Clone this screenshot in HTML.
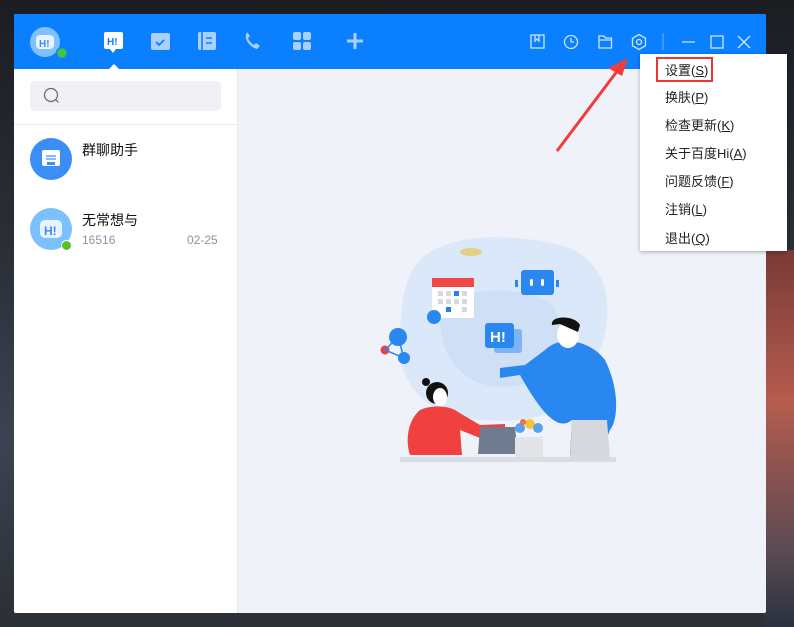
<!DOCTYPE html>
<html><head><meta charset="utf-8"><style>
*{margin:0;padding:0;box-sizing:border-box}
body{width:794px;height:627px;overflow:hidden;position:relative;font-family:"Liberation Sans","Noto Sans CJK SC",sans-serif;
background:linear-gradient(180deg,#1b1d22 0%,#2a2f38 40%,#3b4450 70%,#2b2f36 100%);}
.bgr{position:absolute;right:0;top:250px;width:30px;height:377px;background:linear-gradient(180deg,#7a3a36,#b55c4e 40%,#5a4a52 80%,#2a3140)}
.win{position:absolute;left:14px;top:14px;width:752px;height:599px;background:#eff3f9;border-radius:2px;overflow:hidden}
.hdr{position:absolute;left:0;top:0;width:752px;height:55px;background:#0a80ff}
.side{position:absolute;left:0;top:55px;width:224px;height:544px;background:#fff;border-right:1px solid #e6e8ec}
.search{position:absolute;left:16px;top:12px;width:191px;height:30px;background:#f0f1f5;border-radius:4px}
.sep{position:absolute;left:0;top:55px;width:224px;height:1px;background:#e8e8e8}
.item{position:absolute;left:16px;width:42px;height:42px;border-radius:50%}
.name{position:absolute;left:68px;font-size:14px;color:#111}
.sub{position:absolute;font-size:12px;color:#8a94a3}
.menu{position:absolute;left:640px;top:54px;width:147px;height:197px;background:#fff;box-shadow:0 1px 4px rgba(0,0,0,.3)}
.menu div{position:absolute;left:25px;font-size:13px;color:#222}
.menu u{text-decoration:underline}
</style></head><body>
<div class="bgr"></div>
<div class="win">
 <div class="hdr">
  <svg width="752" height="55" style="position:absolute;left:0;top:0">
   <circle cx="31" cy="28" r="15" fill="#7fc0ff"/>
   <rect x="22" y="21" width="18" height="14" rx="4" fill="#e8f3ff"/>
   <text x="25" y="33" font-size="10" font-weight="bold" fill="#3a8cf0" font-family="Liberation Sans">H!</text>
   <circle cx="48" cy="39" r="5.5" fill="#3fc53f" stroke="#0a80ff" stroke-width="1.5"/>
   <rect x="90" y="18" width="19" height="17" rx="2" fill="#fff"/><path d="M96 35 l3 4 3-4z" fill="#fff"/>
   <text x="93" y="31" font-size="10" font-weight="bold" fill="#0a80ff" font-family="Liberation Sans">H!</text>
   <path d="M95 55 l5 -5 5 5z" fill="#fff"/>
   <g fill="#a9d0ff"><rect x="137" y="19" width="19" height="17" rx="2"/><rect x="184" y="18" width="18" height="18" rx="2"/>
   <rect x="279" y="18" width="8" height="8" rx="2"/><rect x="289" y="18" width="8" height="8" rx="2"/><rect x="279" y="28" width="8" height="8" rx="2"/><rect x="289" y="28" width="8" height="8" rx="2"/></g>
   <path d="M137 22 h19" stroke="#0a80ff" stroke-width="0"/>
   <path d="M142 28 l3 3 5-5" stroke="#0a80ff" stroke-width="1.8" fill="none"/>
   <path d="M188 18 v18 M192 24 h6 M192 29 h6" stroke="#0a80ff" stroke-width="1.6"/>
   <path d="M233 19 c-4 4 2 14 10 16 l3-3 -4-3 -2 2 c-3-2-5-4-6-7 l2-2 -3-4z" fill="#a9d0ff"/>
   <path d="M341 19 v16 M333 27 h16" stroke="#a9d0ff" stroke-width="3"/>
   <g stroke="#cfe4ff" stroke-width="1.3" fill="none">
    <rect x="517" y="21" width="13" height="13"/><path d="M521 21 v6 l2-2 2 2 v-6"/>
    <circle cx="557" cy="28" r="6.5"/><path d="M557 24 v4 h3"/>
    <path d="M585 22 h5 l1.5 2 h6 v10 h-12.5z M585 26 h12.5"/>
    <path d="M625 20.5 l6.5 3.75 v7.5 l-6.5 3.75 -6.5-3.75 v-7.5z"/><circle cx="625" cy="28" r="2.5"/>
    <path d="M649 19 v17" stroke="#5aa5ff"/>
    <path d="M668 28 h13"/><rect x="697" y="22" width="12" height="12"/><path d="M724 22 l12 12 M736 22 l-12 12"/>
   </g>
  </svg>
 </div>
 <div class="side">
  <div class="search"><svg width="30" height="30"><circle cx="21" cy="14" r="6.5" stroke="#666" stroke-width="1.2" fill="none"/><path d="M25.5 18.5 l3 3" stroke="#666" stroke-width="1.2"/></svg></div>
  <div class="sep"></div>
  <div class="item" style="top:69px;background:#3b8ef5"><svg width="42" height="42"><rect x="12" y="12" width="18" height="16" rx="2" fill="#fff"/><path d="M17 24 h8 v3 h-8z" fill="#3b8ef5"/><path d="M16 18 h10 M16 21 h10" stroke="#3b8ef5" stroke-width="1.3"/></svg></div>
  <div class="name" style="top:71px">群聊助手</div>
  <div class="item" style="top:139px;background:#7cc1ff"><svg width="42" height="42"><rect x="10" y="12" width="22" height="18" rx="5" fill="#e8f3ff"/><text x="14" y="27" font-size="12" font-weight="bold" fill="#3a8cf0" font-family="Liberation Sans">H!</text></svg></div>
  <div style="position:absolute;left:47px;top:171px;width:11px;height:11px;border-radius:50%;background:#5fbf1f;border:1.5px solid #fff"></div>
  <div class="name" style="top:141px">无常想与</div>
  <div class="sub" style="left:68px;top:164px">16516</div>
  <div class="sub" style="left:173px;top:164px">02-25</div>
 </div>
 <svg width="752" height="599" style="position:absolute;left:0;top:0">
  <g transform="translate(-14,-14)">
   <path d="M420 260 C450 230 520 235 560 245 C610 258 615 310 600 350 C585 410 540 425 480 420 C420 415 395 380 400 330 C402 300 405 275 420 260z" fill="#dbe8f9"/>
   <path d="M440 320 C450 285 510 285 545 300 C575 320 560 370 520 385 C480 395 440 370 440 320z" fill="#cfe0f6"/>
   <ellipse cx="471" cy="252" rx="11" ry="4" fill="#e3cf8a"/>
   <rect x="432" y="278" width="42" height="40" rx="2" fill="#fff"/><rect x="432" y="278" width="42" height="9" fill="#f0494a"/>
   <g fill="#d5d8de"><rect x="438" y="291" width="5" height="5"/><rect x="446" y="291" width="5" height="5"/><rect x="462" y="291" width="5" height="5"/><rect x="438" y="299" width="5" height="5"/><rect x="446" y="299" width="5" height="5"/><rect x="454" y="299" width="5" height="5"/><rect x="462" y="299" width="5" height="5"/><rect x="446" y="307" width="5" height="5"/><rect x="462" y="307" width="5" height="5"/></g>
   <rect x="454" y="291" width="5" height="5" fill="#2a7de8"/><rect x="446" y="307" width="5" height="5" fill="#2a7de8"/>
   <circle cx="434" cy="317" r="7" fill="#2a87ef"/>
   <rect x="521" y="270" width="33" height="25" rx="3" fill="#2a87ef"/>
   <rect x="530" y="279" width="3" height="7" rx="1.5" fill="#fff"/><rect x="541" y="279" width="3" height="7" rx="1.5" fill="#fff"/>
   <rect x="515" y="280" width="3" height="7" fill="#2a87ef"/><rect x="556" y="280" width="3" height="7" fill="#2a87ef"/>
   <rect x="494" y="329" width="28" height="24" rx="3" fill="#7db4f5"/>
   <rect x="485" y="323" width="29" height="25" rx="3" fill="#2a87ef"/>
   <text x="490" y="342" font-size="15" font-weight="bold" fill="#fff" font-family="Liberation Sans">H!</text>
   <circle cx="398" cy="337" r="9" fill="#2a87ef"/><circle cx="404" cy="358" r="6" fill="#2a87ef"/><circle cx="385" cy="350" r="4.5" fill="#f04040"/>
   <path d="M398 337 L404 358 L385 350z" stroke="#2a87ef" stroke-width="1.5" fill="none"/>
   <rect x="400" y="457" width="216" height="5" fill="#d8dce3"/>
   <path d="M545 350 C560 335 590 340 605 360 C620 390 618 420 610 430 L600 455 L570 455 L572 420 C560 430 545 420 520 375 L500 378 L500 368 L525 365 z" fill="#2a87ef"/>
   <path d="M572 420 h35 l3 40 h-40z" fill="#d6d8dd"/>
   <ellipse cx="568" cy="335" rx="11" ry="13" fill="#fff"/>
   <path d="M552 325 C550 315 575 315 580 325 L578 332 L560 324z" fill="#111"/>
   <path d="M420 410 C430 405 450 405 458 412 L480 425 L505 424 L505 430 L480 438 L460 430 L462 455 L410 455 C405 440 408 420 420 410z" fill="#f04040"/>
   <circle cx="437" cy="393" r="11" fill="#111"/><ellipse cx="440" cy="397" rx="7" ry="9" fill="#fff"/><circle cx="426" cy="382" r="4" fill="#111"/>
   <path d="M480 427 h35 l3 27 h-40z" fill="#6f7c8f"/>
   <rect x="515" y="437" width="28" height="20" fill="#e2e4e8"/>
   <circle cx="520" cy="428" r="5" fill="#5aa0f0"/><circle cx="530" cy="424" r="5" fill="#f5c43a"/><circle cx="538" cy="428" r="5" fill="#5aa0f0"/><circle cx="523" cy="422" r="3" fill="#f07040"/>
  </g>
 </svg>
</div>
<svg width="794" height="627" style="position:absolute;left:0;top:0;pointer-events:none">
 <path d="M557 151 L618 70" stroke="#f03c3c" stroke-width="3"/>
 <path d="M628 58 L608 68 L622 76z" fill="#f03c3c"/>
</svg>
<div class="menu">
 <div style="top:6px">设置(<u>S</u>)</div>
 <div style="top:33px">换肤(<u>P</u>)</div>
 <div style="top:61px">检查更新(<u>K</u>)</div>
 <div style="top:89px">关于百度Hi(<u>A</u>)</div>
 <div style="top:117px">问题反馈(<u>F</u>)</div>
 <div style="top:145px">注销(<u>L</u>)</div>
 <div style="top:174px">退出(<u>Q</u>)</div>
 <span style="position:absolute;left:16px;top:3px;width:57px;height:25px;border:2px solid #ee3333"></span>
</div>
</body></html>
